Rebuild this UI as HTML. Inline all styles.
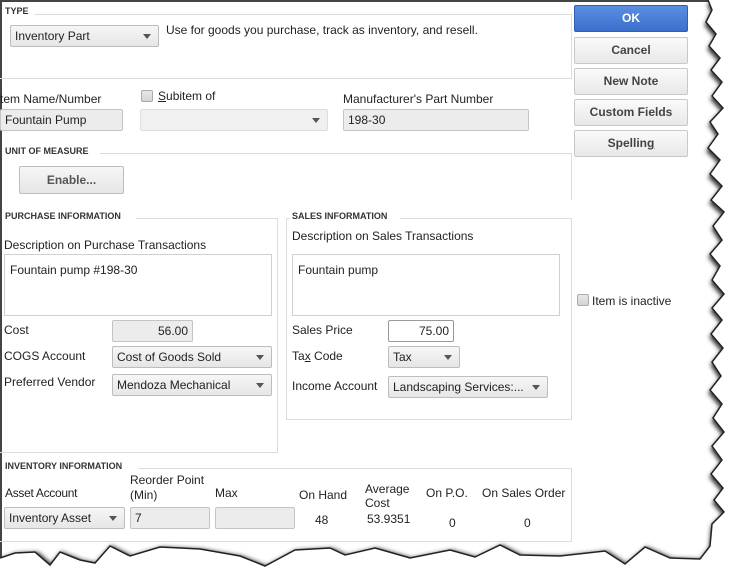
<!DOCTYPE html>
<html><head><meta charset="utf-8"><style>
*{margin:0;padding:0;box-sizing:border-box}
body{width:748px;height:588px;position:relative;overflow:hidden;background:#fff;font-family:"Liberation Sans",sans-serif;font-size:12px;color:#222}
.a{position:absolute;white-space:nowrap}
.h{font-size:9px;font-weight:bold;color:#333}
.ln{position:absolute;background:#dcdcdc}
.in{position:absolute;border:1px solid #c4c4c4;border-radius:2px;background:#ececec;padding:3px 4px;font-size:12px}
.cb{position:absolute;border:1px solid #bdbdbd;border-radius:2px;background:linear-gradient(#f6f6f6,#e6e6e6);padding:3px 4px;font-size:12px}
.cb:after{content:"";position:absolute;right:7px;top:8px;border-left:4px solid transparent;border-right:4px solid transparent;border-top:5px solid #555}
.cb.nb:after{display:none}
.btn{position:absolute;left:574px;width:114px;height:27px;border:1px solid #c8c8c8;border-radius:2px;background:linear-gradient(#fafafa,#e8e8e8);font-weight:bold;color:#444;text-align:center;line-height:25px}
.chk{position:absolute;width:12px;height:12px;border:1px solid #aaa;border-radius:2px;background:linear-gradient(#e8e8e8,#d4d4d4)}
.ta{position:absolute;border:1px solid #d0d0d0;background:#fff;padding:8px 5px}
</style></head><body>
<div class="ln" style="left:0;top:0;width:710px;height:2px;background:#444"></div>
<div class="ln" style="left:0;top:0;width:2px;height:560px;background:#444"></div>

<div class="a h" style="left:5px;top:6px">TYPE</div>
<div class="ln" style="left:34px;top:14px;width:537px;height:1px"></div>
<div class="ln" style="left:571px;top:14px;width:1px;height:64px"></div>
<div class="ln" style="left:0;top:78px;width:572px;height:1px"></div>
<div class="cb" style="left:10px;top:25px;width:149px;height:22px">Inventory Part</div>
<div class="a" style="left:166px;top:23px">Use for goods you purchase, track as inventory, and resell.</div>

<div class="a" style="left:0;top:92px">tem Name/Number</div>
<div class="in" style="left:0;top:109px;width:123px;height:22px">Fountain Pump</div>
<div class="chk" style="left:141px;top:90px"></div>
<div class="a" style="left:158px;top:89px"><u>S</u>ubitem of</div>
<div class="cb" style="left:140px;top:109px;width:188px;height:22px;background:#f0f0f0;border-color:#ddd"></div>
<div class="a" style="left:343px;top:92px">Manufacturer's Part Number</div>
<div class="in" style="left:343px;top:109px;width:186px;height:22px">198-30</div>

<div class="a h" style="left:5px;top:146px">UNIT OF MEASURE</div>
<div class="ln" style="left:100px;top:153px;width:471px;height:1px"></div>
<div class="ln" style="left:571px;top:153px;width:1px;height:47px"></div>
<div class="cb nb" style="left:19px;top:166px;width:105px;height:28px;text-align:center;line-height:20px;font-weight:bold;color:#555">Enable...</div>

<div class="a h" style="left:5px;top:211px">PURCHASE INFORMATION</div>
<div class="ln" style="left:136px;top:218px;width:141px;height:1px"></div>
<div class="ln" style="left:277px;top:218px;width:1px;height:234px"></div>
<div class="ln" style="left:0;top:452px;width:278px;height:1px"></div>
<div class="a" style="left:4px;top:238px">Description on Purchase Transactions</div>
<div class="ta" style="left:4px;top:254px;width:268px;height:62px">Fountain pump #198-30</div>
<div class="a" style="left:4px;top:323px">Cost</div>
<div class="in" style="left:112px;top:320px;width:81px;height:22px;text-align:right">56.00</div>
<div class="a" style="left:4px;top:349px">COGS Account</div>
<div class="cb" style="left:112px;top:346px;width:160px;height:22px">Cost of Goods Sold</div>
<div class="a" style="left:4px;top:375px">Preferred Vendor</div>
<div class="cb" style="left:112px;top:374px;width:160px;height:22px">Mendoza Mechanical</div>

<div class="ln" style="left:400px;top:218px;width:172px;height:1px"></div>
<div class="ln" style="left:286px;top:218px;width:4px;height:1px"></div>
<div class="ln" style="left:286px;top:218px;width:1px;height:201px"></div>
<div class="ln" style="left:571px;top:218px;width:1px;height:201px"></div>
<div class="ln" style="left:286px;top:419px;width:286px;height:1px"></div>
<div class="a h" style="left:292px;top:211px;background:#fff;padding-right:3px">SALES INFORMATION</div>
<div class="a" style="left:292px;top:229px">Description on Sales Transactions</div>
<div class="ta" style="left:292px;top:254px;width:268px;height:62px">Fountain pump</div>
<div class="a" style="left:292px;top:323px">Sales Price</div>
<div class="in" style="left:388px;top:320px;width:66px;height:22px;text-align:right;background:#fff;border-color:#999">75.00</div>
<div class="a" style="left:292px;top:349px">Ta<u>x</u> Code</div>
<div class="cb" style="left:388px;top:346px;width:72px;height:22px">Tax</div>
<div class="a" style="left:292px;top:379px">Income Account</div>
<div class="cb" style="left:388px;top:376px;width:160px;height:22px">Landscaping Services:...</div>

<div class="chk" style="left:577px;top:294px"></div>
<div class="a" style="left:592px;top:294px">Item is inactive</div>

<div class="btn" style="top:5px;background:linear-gradient(#5b8ee0,#3c6fcc);border-color:#2f5fb5;color:#fff">OK</div>
<div class="btn" style="top:37px">Cancel</div>
<div class="btn" style="top:68px">New Note</div>
<div class="btn" style="top:99px">Custom Fields</div>
<div class="btn" style="top:130px">Spellin<u>g</u></div>

<div class="a h" style="left:5px;top:461px">INVENTORY INFORMATION</div>
<div class="ln" style="left:138px;top:468px;width:434px;height:1px"></div>
<div class="ln" style="left:571px;top:468px;width:1px;height:73px"></div>
<div class="ln" style="left:0;top:541px;width:572px;height:1px"></div>
<div class="a" style="left:5px;top:486px;letter-spacing:-0.3px">Asset Account</div>
<div class="a" style="left:130px;top:473px;line-height:15px">Reorder Point<br>(Min)</div>
<div class="a" style="left:215px;top:486px">Max</div>
<div class="a" style="left:299px;top:488px">On Hand</div>
<div class="a" style="left:365px;top:482px;line-height:14px">Average<br>Cost</div>
<div class="a" style="left:426px;top:486px">On P.O.</div>
<div class="a" style="left:482px;top:486px">On Sales Order</div>
<div class="cb" style="left:4px;top:507px;width:121px;height:22px">Inventory Asset</div>
<div class="in" style="left:130px;top:507px;width:80px;height:22px">7</div>
<div class="in" style="left:215px;top:507px;width:80px;height:22px"></div>
<div class="a" style="left:315px;top:513px">48</div>
<div class="a" style="left:367px;top:512px">53.9351</div>
<div class="a" style="left:449px;top:516px">0</div>
<div class="a" style="left:524px;top:516px">0</div>

<svg class="a" style="left:0;top:0" width="748" height="588">
<defs><filter id="s" x="-5%" y="-5%" width="110%" height="110%"><feGaussianBlur stdDeviation="2"/></filter></defs>
<path id="e" d="M708,0 L712,10 L706,22 L716,34 L709,46 L720,58 L711,70 L722,82 L712,96 L723,108 L710,122 L718,134 L708,148 L720,160 L710,174 L722,186 L711,200 L724,212 L713,226 L722,240 L710,254 L720,266 L712,280 L724,294 L712,308 L722,320 L711,334 L723,348 L712,362 L721,376 L710,390 L722,404 L713,418 L724,432 L712,446 L722,460 L711,474 L723,488 L714,500 L724,512 L712,524 L710,546 L700,559 L670,558 L645,547 L625,564 L605,551 L560,556 L520,555 L500,545 L475,557 L450,550 L410,558 L375,548 L345,555 L330,548 L295,550 L265,566 L240,556 L200,549 L160,547 L130,556 L110,546 L95,563 L80,560 L60,552 L50,565 L35,552 L15,553 L0,558" fill="none"/>
<use href="#e" stroke="#333" stroke-width="6" filter="url(#s)" transform="translate(2,3)"/>
<path d="M708,0 L712,10 L706,22 L716,34 L709,46 L720,58 L711,70 L722,82 L712,96 L723,108 L710,122 L718,134 L708,148 L720,160 L710,174 L722,186 L711,200 L724,212 L713,226 L722,240 L710,254 L720,266 L712,280 L724,294 L712,308 L722,320 L711,334 L723,348 L712,362 L721,376 L710,390 L722,404 L713,418 L724,432 L712,446 L722,460 L711,474 L723,488 L714,500 L724,512 L712,524 L710,546 L700,559 L670,558 L645,547 L625,564 L605,551 L560,556 L520,555 L500,545 L475,557 L450,550 L410,558 L375,548 L345,555 L330,548 L295,550 L265,566 L240,556 L200,549 L160,547 L130,556 L110,546 L95,563 L80,560 L60,552 L50,565 L35,552 L15,553 L0,558 L0,588 L748,588 L748,0 Z" fill="#fff"/>
<use href="#e" stroke="#222" stroke-width="1.5"/>
</svg>
</body></html>
